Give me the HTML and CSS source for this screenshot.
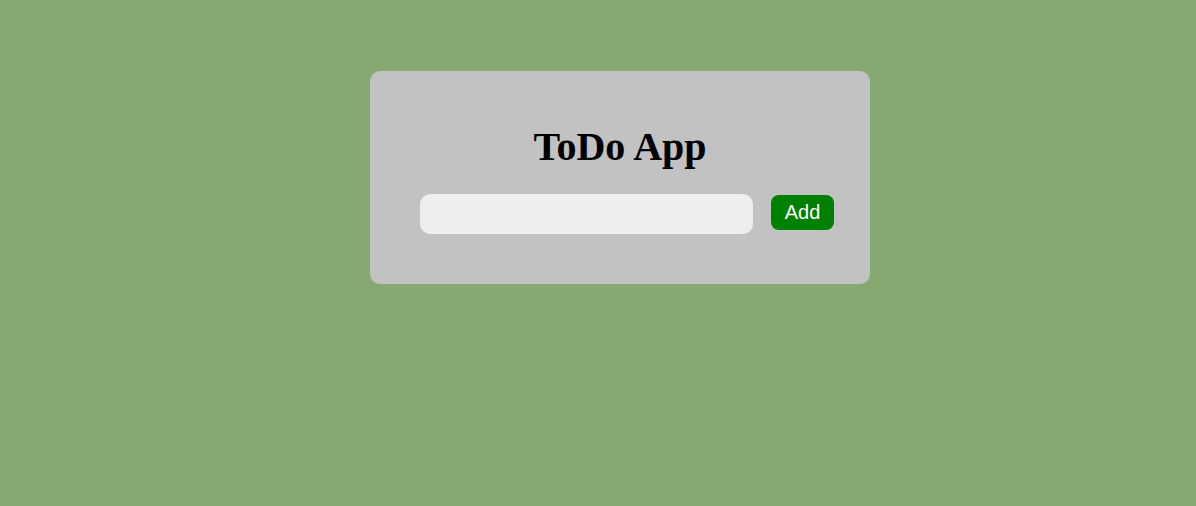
FILE: index.html
```html
<!DOCTYPE html>
<html>
<head>
<meta charset="utf-8">
<link rel="stylesheet" href="styles.css">
</head>
<body>
<div class="card">
  <h1 class="title">ToDo App</h1>
  <div class="row">
    <input class="task-input" type="text">
    <button class="add-btn">Add</button>
  </div>
</div>
</body>
</html>
```
FILE: styles.css
```css
html, body {
  margin: 0;
  padding: 0;
  background: #87a870;
  min-height: 100%;
}
body {
  height: 506px;
  overflow: hidden;
}
.card {
  box-sizing: border-box;
  width: 500px;
  height: 213px;
  margin: 71px 0 0 370px;
  padding: 53px 36px 0 50px;
  background: #c2c2c2;
  border-radius: 10px;
}
.title {
  margin: 0 -36px 24px -50px;
  text-align: center;
  font-family: "Liberation Serif", "Times New Roman", serif;
  font-weight: bold;
  font-size: 40px;
  line-height: 46px;
  color: #000;
}
.row {
  display: flex;
  align-items: flex-start;
}
.task-input {
  box-sizing: border-box;
  width: 333px;
  height: 40px;
  margin: 0 18px 0 0;
  padding: 0 10px;
  border: none;
  border-radius: 10px;
  background: #eeeeee;
  font-family: "Liberation Sans", Arial, sans-serif;
  font-size: 16px;
  outline: none;
}
.add-btn {
  box-sizing: border-box;
  width: 63px;
  height: 35px;
  margin-top: 1px;
  padding: 0;
  border: none;
  border-radius: 8px;
  background: #008000;
  color: #fff;
  font-family: "Liberation Sans", Arial, sans-serif;
  font-size: 20px;
  line-height: 35px;
}
```
